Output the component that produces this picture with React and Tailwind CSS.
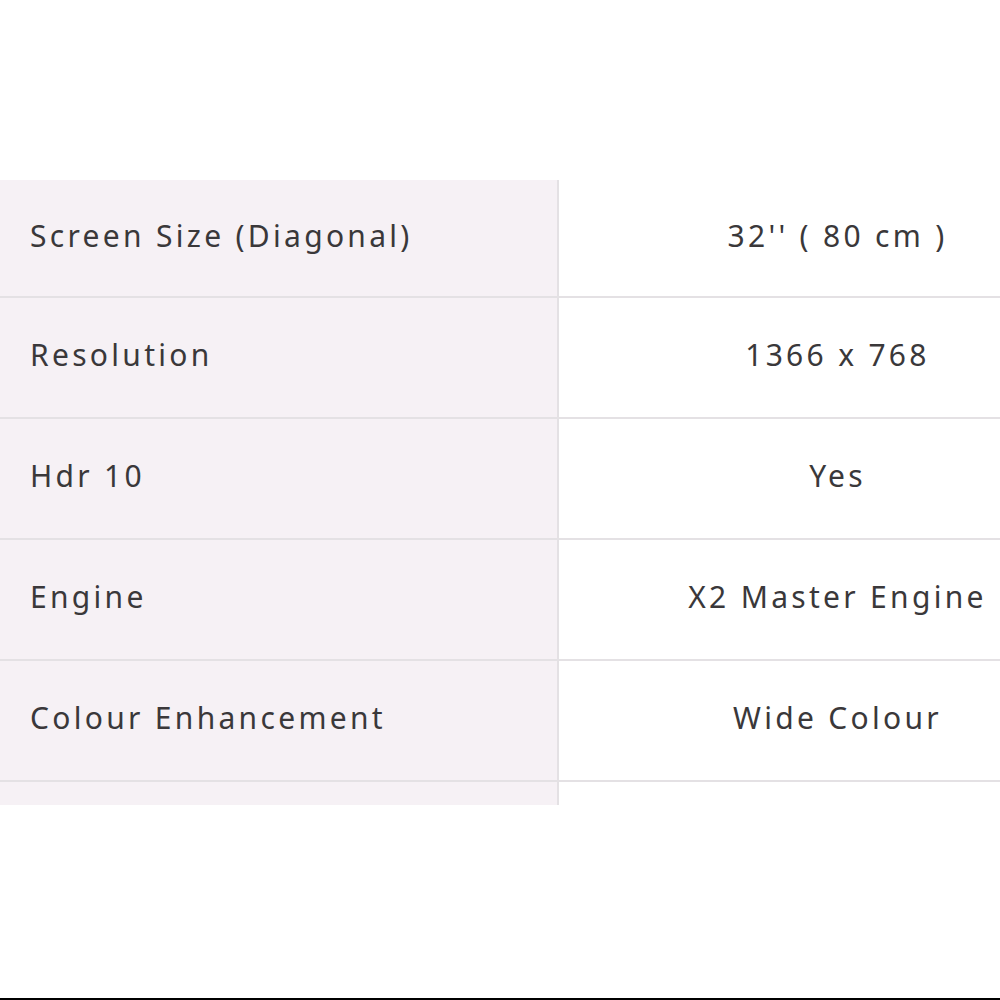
import React from 'react';

const specs = [
  { label: 'Screen Size (Diagonal)', value: "32'' ( 80 cm )" },
  { label: 'Resolution', value: '1366 x 768' },
  { label: 'Hdr 10', value: 'Yes' },
  { label: 'Engine', value: 'X2 Master Engine' },
  { label: 'Colour Enhancement', value: 'Wide Colour' },
  { label: '', value: '' },
];

export default function App() {
  return (
    <div
      className="relative h-[1000px] w-[1000px] overflow-hidden bg-white text-[#3a383a]"
      style={{ fontFamily: '"Noto Sans", "Open Sans", sans-serif' }}
    >
      <div className="mt-[180px] h-[625px] w-[1116px] overflow-hidden">
        {specs.map((row, i) => (
          <div
            key={i}
            className={`flex border-b-2 border-[#e4e1e4] ${i === 0 ? 'h-[118px]' : 'h-[121px]'}`}
          >
            <div className="flex w-[559px] items-center border-r-2 border-[#e4e1e4] bg-[#f6f1f5] pb-[6px] pl-[30px] text-[30px] tracking-[3.3px]">
              {row.label}
            </div>
            <div className="flex w-[557px] items-center justify-center bg-white pb-[6px] text-[30px] tracking-[3.3px]">
              {row.value}
            </div>
          </div>
        ))}
      </div>
      <div className="absolute bottom-0 left-0 h-[2px] w-full bg-black" />
    </div>
  );
}
